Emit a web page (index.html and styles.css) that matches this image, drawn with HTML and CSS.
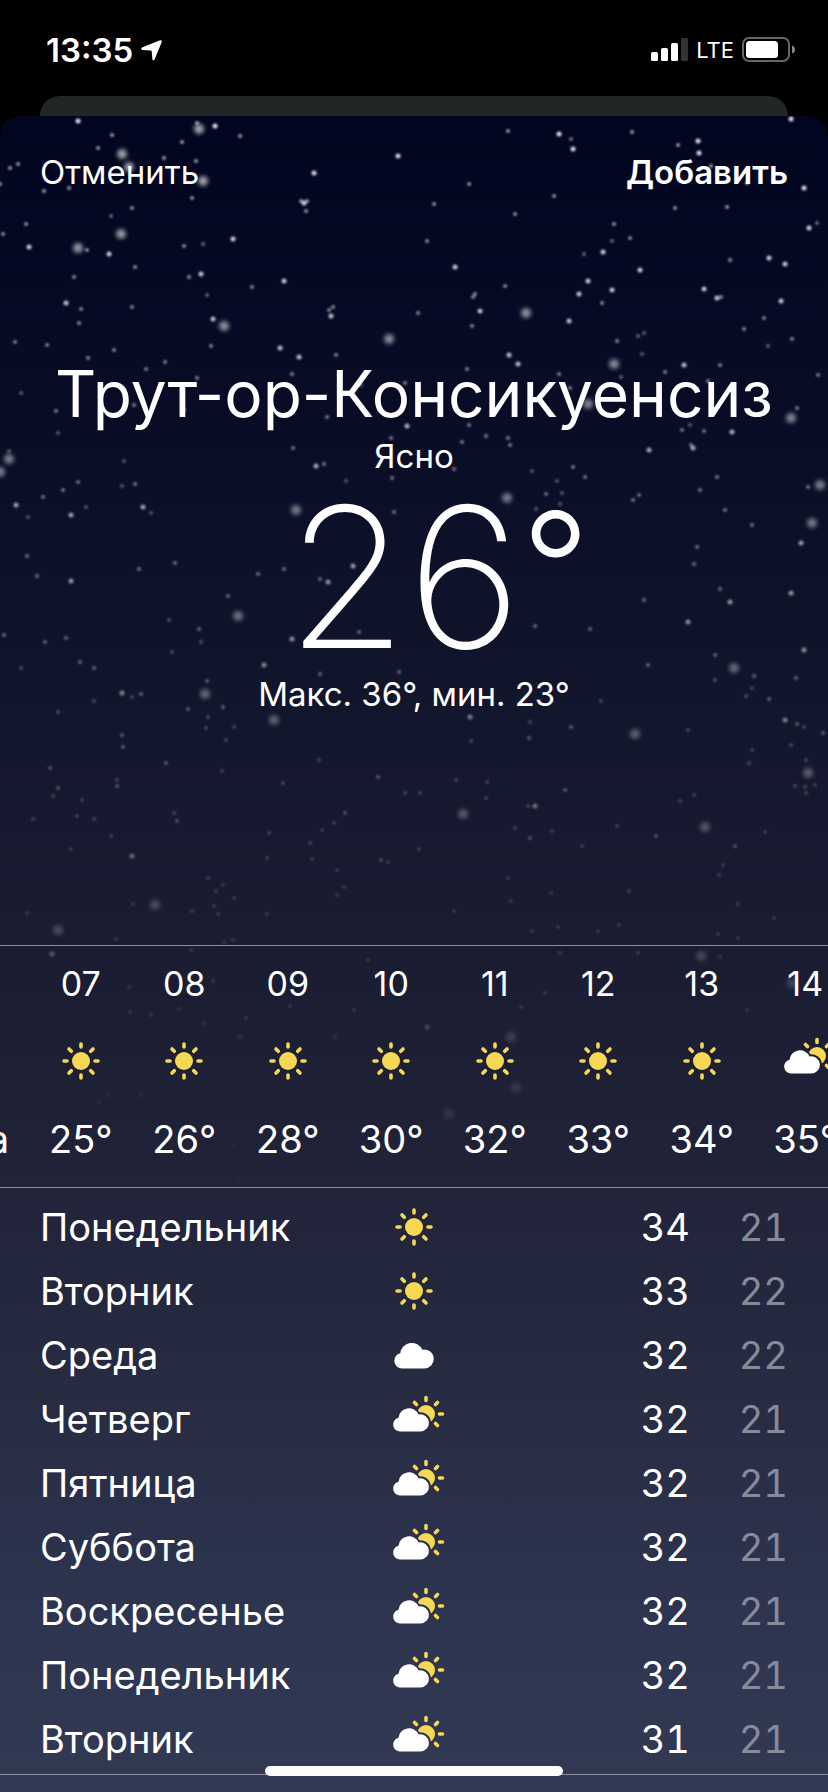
FILE: index.html
```html
<!DOCTYPE html>
<html lang="ru">
<head>
    <meta charset="UTF-8">
    <meta name="viewport" content="width=device-width, initial-scale=1">
    <title>Погода</title>
    <link rel="stylesheet" href="styles.css">
</head>
<body>

<!-- shared icons -->
<svg class="sprite" aria-hidden="true">
    <defs>
        <path id="cloud-shape" d="M7 36.5A7 7 0 0 1 5.5 22.7A10.5 10.5 0 0 1 25.5 19.5A8.6 8.6 0 1 1 27 36.5Z"/>
        <mask id="behind-cloud" maskUnits="userSpaceOnUse" x="0" y="0" width="52" height="38">
            <rect width="52" height="38" fill="#fff"/>
            <use href="#cloud-shape" fill="#000" stroke="#000" stroke-width="4"/>
        </mask>
    </defs>
    <symbol id="sun" viewBox="0 0 38 38">
        <circle cx="19" cy="19" r="9" fill="#f6d855"/>
        <path d="M19 2v3M19 33v3M2 19h3M33 19h3M7 7l2.3 2.3M28.7 28.7l2.3 2.3M7 31l2.3-2.3M28.7 9.3l2.3-2.3" stroke="#f6d855" stroke-width="3.6" stroke-linecap="round"/>
    </symbol>
    <symbol id="cloud" viewBox="0 12.5 36 24.5">
        <use href="#cloud-shape" fill="#fff"/>
    </symbol>
    <symbol id="partly" viewBox="-10 0 62 48">
        <g mask="url(#behind-cloud)">
            <circle cx="33" cy="19" r="9" fill="#f6d855"/>
            <path d="M33 2.5v3M46.5 19h3M21.5 7.5l2 2M42.5 28.5l2 2M42.5 9.5l2-2" stroke="#f6d855" stroke-width="3.6" stroke-linecap="round"/>
        </g>
        <use href="#cloud-shape" fill="#fff"/>
    </symbol>
</svg>

<div class="status">
    <div class="status-left">
        <span>13:35</span>
        <svg class="location" viewBox="0 0 21 21"><path d="M19 .3Q21.300 0 20.700 2.300L13.600 19.600Q12.400 21.300 11.400 19.400L10.700 11.200Q10.600 10.500 9.900 10.400L1.200 9.900Q-.8 9 1 7.600Z" fill="#fff"/></svg>
    </div>
    <div class="status-right">
        <svg class="signal" viewBox="0 0 37 24">
            <g fill="#fff">
                <rect x="0" y="14" width="7" height="9" rx="1.500"/>
                <rect x="10" y="10" width="7" height="13" rx="1.500"/>
                <rect x="20" y="5" width="7" height="18" rx="1.500"/>
            </g>
            <rect x="30" y="0" width="7" height="23" rx="1.500" fill="#333"/>
        </svg>
        <span class="network">LTE</span>
        <svg class="battery" viewBox="0 0 54 26">
            <rect x="1" y="1" width="46" height="23" rx="6" fill="none" stroke="#666" stroke-width="2"/>
            <rect x="4" y="4" width="32" height="17" rx="3.500" fill="#fff"/>
            <path d="M50 8.500q3 1 3 4t-3 4z" fill="#888"/>
        </svg>
    </div>
</div>

<div class="back-sheet"></div>

<main class="sheet">
    <svg class="stars" viewBox="0 116 828 1100" aria-hidden="true">
        <defs>
            <linearGradient id="fade" gradientUnits="userSpaceOnUse" x1="0" y1="116" x2="0" y2="1216">
                <stop offset="0" stop-color="#fff" stop-opacity=".85"/>
                <stop offset=".45" stop-color="#fff" stop-opacity=".52"/>
                <stop offset="1" stop-color="#fff" stop-opacity=".05"/>
            </linearGradient>
        </defs>
        <path class="star star-big" stroke="url(#fade)" d="M199 129h.1M122 154h.1M129 167h.1M203 181h.1M121 234h.1M78 248h.1M224 326h.1M389 339h.1M9 459h.1M0 472h.1M296 510h.1M526 313h.1M614 364h.1M588 404h.1M791 418h.1M820 485h.1M507 498h.1M238 616h.1M205 694h.1M274 720h.1M635 734h.1M734 668h.1M812 523h.1M808 773h.1M463 814h.1M705 827h.1M155 905h.1M58 930h.1M701 956h.1M792 983h.1M511 1037h.1M516 1088h.1M449 1114h.1"/>
        <path class="star star-bright" stroke="url(#fade)" d="M78 121h.1M215 126h.1M398 156h.1M314 173h.1M304 203h.1M559 134h.1M791 119h.1M699 153h.1M573 149h.1M698 141h.1M804 188h.1M29 247h.1M109 254h.1M201 274h.1M233 239h.1M284 281h.1M66 303h.1M213 319h.1M331 316h.1M280 348h.1M299 357h.1M407 426h.1M316 466h.1M16 505h.1M71 515h.1M143 507h.1M455 267h.1M603 252h.1M640 270h.1M588 281h.1M579 294h.1M569 321h.1M480 311h.1M509 355h.1M518 364h.1M769 258h.1M809 228h.1M704 289h.1M717 298h.1M781 301h.1M732 432h.1M693 448h.1M649 450h.1M684 365h.1M612 290h.1M785 264h.1M71 581h.1M292 639h.1M328 582h.1M264 665h.1M353 566h.1M730 602h.1M791 593h.1M688 622h.1M804 650h.1M122 693h.1M132 856h.1M535 806h.1M470 717h.1M785 720h.1M801 543h.1M52 954h.1M427 1027h.1"/>
        <path class="star" stroke="url(#fade)" d="M112 135h.1M98 148h.1M182 142h.1M240 136h.1M164 158h.1M196 161h.1M10 168h.1M18 164h.1M44 191h.1M69 188h.1M192 198h.1M132 208h.1M301 201h.1M307 201h.1M306 211h.1M0 184h.1M197 123h.1M678 145h.1M632 132h.1M508 131h.1M469 184h.1M554 196h.1M434 204h.1M515 214h.1M711 166h.1M747 183h.1M727 207h.1M675 208h.1M26 224h.1M3 234h.1M87 250h.1M135 267h.1M184 246h.1M74 277h.1M189 277h.1M252 287h.1M81 309h.1M132 307h.1M79 323h.1M333 307h.1M329 310h.1M15 342h.1M47 345h.1M88 358h.1M114 350h.1M165 362h.1M146 369h.1M211 346h.1M336 355h.1M197 378h.1M292 374h.1M56 411h.1M134 405h.1M405 383h.1M327 417h.1M391 438h.1M293 448h.1M324 464h.1M78 482h.1M63 490h.1M43 497h.1M135 484h.1M392 478h.1M394 512h.1M614 224h.1M630 238h.1M505 286h.1M475 294h.1M473 297h.1M602 303h.1M427 241h.1M418 313h.1M472 326h.1M467 369h.1M617 341h.1M665 372h.1M720 365h.1M708 381h.1M559 374h.1M570 388h.1M730 260h.1M721 297h.1M764 318h.1M744 329h.1M792 339h.1M818 375h.1M797 408h.1M704 431h.1M682 430h.1M691 445h.1M462 442h.1M469 425h.1M486 436h.1M508 438h.1M510 445h.1M454 469h.1M573 467h.1M585 477h.1M546 494h.1M639 495h.1M633 500h.1M700 490h.1M717 477h.1M725 510h.1M808 487h.1M27 556h.1M175 563h.1M139 569h.1M37 576h.1M258 574h.1M284 569h.1M320 579h.1M228 596h.1M199 629h.1M4 635h.1M45 642h.1M66 638h.1M80 662h.1M94 668h.1M359 632h.1M535 626h.1M590 629h.1M697 547h.1M694 564h.1M752 525h.1M720 589h.1M644 600h.1M320 674h.1M399 672h.1M715 655h.1M648 665h.1M796 678h.1M754 676h.1M769 699h.1M207 681h.1M141 694h.1M188 709h.1M223 707h.1M122 735h.1M123 747h.1M50 768h.1M166 763h.1M117 786h.1M58 788h.1M177 821h.1M345 813h.1M378 777h.1M530 838h.1M656 836h.1M735 846h.1M381 860h.1M565 790h.1M571 727h.1M529 738h.1M797 724h.1M823 733h.1"/>
        <path class="star star-dim" stroke="url(#fade)" d="M111 216h.1M571 139h.1M203 244h.1M207 295h.1M21 393h.1M58 433h.1M184 410h.1M361 385h.1M9 451h.1M124 461h.1M28 517h.1M86 507h.1M122 486h.1M151 513h.1M346 481h.1M612 241h.1M584 254h.1M638 336h.1M644 333h.1M642 354h.1M621 377h.1M817 223h.1M768 346h.1M690 425h.1M532 471h.1M557 481h.1M562 493h.1M560 504h.1M536 509h.1M169 620h.1M201 642h.1M172 652h.1M21 668h.1M132 697h.1M94 701h.1M58 712h.1M208 717h.1M206 728h.1M234 727h.1M226 740h.1M222 771h.1M117 780h.1M53 796h.1M82 800h.1M33 819h.1M94 819h.1M77 816h.1M174 813h.1M111 836h.1M71 849h.1M269 833h.1M334 823h.1M322 830h.1M319 760h.1M283 783h.1M715 680h.1M752 688h.1M746 696h.1M601 701h.1M804 727h.1M791 745h.1M688 730h.1M530 722h.1M471 741h.1M752 750h.1M749 763h.1M806 760h.1M795 786h.1M805 787h.1M806 793h.1M815 785h.1M456 780h.1M487 782h.1M486 798h.1M694 795h.1M680 801h.1M405 793h.1M420 793h.1M528 806h.1M515 828h.1M552 831h.1M617 826h.1M765 832h.1M582 846h.1M419 849h.1M388 862h.1M312 859h.1M337 870h.1M267 858h.1M310 843h.1M344 887h.1M337 895h.1M216 891h.1M208 878h.1M223 885h.1M234 898h.1M214 906h.1M218 914h.1M267 914h.1M133 904h.1M192 911h.1M27 913h.1M508 878h.1M511 901h.1M454 911h.1M551 893h.1M629 891h.1M719 875h.1M723 865h.1M774 918h.1M738 904h.1M718 934h.1M738 938h.1M619 925h.1M558 927h.1M532 931h.1M598 931h.1M224 942h.1M233 940h.1M116 939h.1M191 950h.1M368 960h.1M129 987h.1M213 981h.1M130 1012h.1M151 1015h.1M179 1009h.1M246 1018h.1M204 1023h.1M290 1006h.1M354 1010h.1M240 1037h.1M335 1037h.1M99 1102h.1M108 1095h.1M141 1095h.1M233 1145h.1M239 1179h.1M521 1007h.1M545 993h.1M560 953h.1M638 953h.1M720 957h.1M747 1010h.1"/>
    </svg>

    <header class="toolbar">
        <button type="button">Отменить</button>
        <button type="button" class="add">Добавить</button>
    </header>

    <section class="now">
        <h1>Трут-ор-Консикуенсиз</h1>
        <p>Ясно</p>
        <div class="temp">26<span class="degree">°</span></div>
        <p>Макс. 36°, мин. 23°</p>
    </section>

    <section class="hours">
        <div class="hour edge"><b>а</b></div>
        <div class="hour"><span>07</span><svg class="sun"><use href="#sun"/></svg><b>25°</b></div>
        <div class="hour"><span>08</span><svg class="sun"><use href="#sun"/></svg><b>26°</b></div>
        <div class="hour"><span>09</span><svg class="sun"><use href="#sun"/></svg><b>28°</b></div>
        <div class="hour"><span>10</span><svg class="sun"><use href="#sun"/></svg><b>30°</b></div>
        <div class="hour"><span>11</span><svg class="sun"><use href="#sun"/></svg><b>32°</b></div>
        <div class="hour"><span>12</span><svg class="sun"><use href="#sun"/></svg><b>33°</b></div>
        <div class="hour"><span>13</span><svg class="sun"><use href="#sun"/></svg><b>34°</b></div>
        <div class="hour"><span>14</span><svg class="partly"><use href="#partly"/></svg><b>35°</b></div>
    </section>

    <table class="days">
        <tr><th scope="row">Понедельник</th><td class="icon"><svg class="sun"><use href="#sun"/></svg></td><td class="high">34</td><td class="low">21</td></tr>
        <tr><th scope="row">Вторник</th><td class="icon"><svg class="sun"><use href="#sun"/></svg></td><td class="high">33</td><td class="low">22</td></tr>
        <tr><th scope="row">Среда</th><td class="icon"><svg class="cloud"><use href="#cloud"/></svg></td><td class="high">32</td><td class="low">22</td></tr>
        <tr><th scope="row">Четверг</th><td class="icon"><svg class="partly"><use href="#partly"/></svg></td><td class="high">32</td><td class="low">21</td></tr>
        <tr><th scope="row">Пятница</th><td class="icon"><svg class="partly"><use href="#partly"/></svg></td><td class="high">32</td><td class="low">21</td></tr>
        <tr><th scope="row">Суббота</th><td class="icon"><svg class="partly"><use href="#partly"/></svg></td><td class="high">32</td><td class="low">21</td></tr>
        <tr><th scope="row">Воскресенье</th><td class="icon"><svg class="partly"><use href="#partly"/></svg></td><td class="high">32</td><td class="low">21</td></tr>
        <tr><th scope="row">Понедельник</th><td class="icon"><svg class="partly"><use href="#partly"/></svg></td><td class="high">32</td><td class="low">21</td></tr>
        <tr><th scope="row">Вторник</th><td class="icon"><svg class="partly"><use href="#partly"/></svg></td><td class="high">31</td><td class="low">21</td></tr>
    </table>
</main>

<div class="home-indicator"></div>

</body>
</html>
```

FILE: styles.css
```css
* {
    box-sizing: border-box;
}

body {
    margin: 0;
    min-height: 100vh;
    display: flex;
    flex-direction: column;

    font-family: Inter, "Liberation Sans", sans-serif;
    background-color: #000;
    color: #fff;
}

svg {
    display: block;
}

.sprite {
    position: absolute;
    width: 0;
    height: 0;
}

/* status bar */

.status {
    height: 96px;
    padding: 4px 32px 0 46px;
    display: flex;
    justify-content: space-between;
    align-items: center;

    font-size: 33px;
    font-weight: 600;
}

.status-left,
.status-right {
    display: flex;
    align-items: center;
    gap: 8px;
}

.location {
    width: 21px;
    height: 21px;
}

.signal {
    width: 37px;
    height: 24px;
}

.network {
    font-size: 22px;
    font-weight: 400;
}

.battery {
    width: 54px;
    height: 26px;
}

/* sheets */

.back-sheet {
    height: 20px;
    margin: 0 40px;
    border-radius: 20px 20px 0 0;
    background-color: #232627;
}

.sheet {
    flex: 1;
    position: relative;
    overflow: hidden;
    border-radius: 20px 20px 0 0;
    background: linear-gradient(#01051f, #090d26 20%, #12162c 35%, #1a1c32 50%, #202238 62%, #262b41 75%, #2e3550 90%, #323953);
}

.stars {
    position: absolute;
    top: 0;
    left: 0;
    width: 100%;
}

.star {
    fill: none;
    stroke-width: 4;
    stroke-linecap: round;
    opacity: 0.7;
    filter: blur(1px);
}

.star-bright {
    stroke-width: 5;
    opacity: 1;
}

.star-dim {
    opacity: 0.5;
}

.star-big {
    stroke-width: 10;
    opacity: 0.75;
    filter: blur(2px);
}

.toolbar,
.now,
.hours,
.days {
    position: relative;
}

.toolbar {
    display: flex;
    justify-content: space-between;
    padding: 36px 40px 0;
}

button {
    padding: 0;
    border: 0;
    background: none;
    color: inherit;
    font: inherit;
    font-size: 33px;
    line-height: 40px;
    cursor: pointer;
}

button.add {
    font-weight: 600;
}

/* current weather */

.now {
    height: 753px;
    padding-top: 160px;
    text-align: center;
}

h1 {
    margin: 0;
    font-size: 64px;
    font-weight: 400;
    line-height: 84px;
    white-space: nowrap;
}

p {
    margin: 0;
    font-size: 33px;
    line-height: 40px;
}

.temp {
    padding: 4px 0 0 48px;
    font-size: 196px;
    font-weight: 200;
    line-height: 194px;
}

.degree {
    font-size: 150px;
    font-weight: 300;
    line-height: 100px;
    vertical-align: 28px;
}

/* hourly forecast */

.hours {
    display: grid;
    grid-template-columns: 29px repeat(8, 12.5%);
    height: 243px;
    overflow: hidden;
    border-top: 1px solid #8d8f9e;
    border-bottom: 1px solid #8d8f9e;
}

.hour {
    display: flex;
    flex-direction: column;
    align-items: center;
    justify-content: space-between;
    padding: 16px 0 24px;

    font-size: 34px;
    line-height: 44px;
}

.hour b {
    font-size: 38px;
    font-weight: 400;
    line-height: 48px;
}

.edge {
    align-items: flex-end;
    justify-content: flex-end;
    padding-right: 20px;
}

.sun {
    width: 38px;
    height: 38px;
}

.cloud {
    width: 40px;
    height: 27px;
}

.partly {
    width: 62px;
    height: 48px;
}

/* daily forecast */

.days {
    width: 100%;
    padding: 7px 40px 3px;
    table-layout: fixed;
    border-collapse: separate;
    border-spacing: 0;
    border-bottom: 1px solid #8d8f9e;

    font-size: 38px;
    line-height: 48px;
    font-variant-numeric: tabular-nums;
}

.days th,
.days td {
    height: 64px;
    padding: 0;
    font-weight: 400;
    text-align: right;
}

.days th {
    width: 44%;
    text-align: left;
}

.days .icon {
    width: 12%;
}

.icon svg {
    margin: 0 auto;
}

.days .low {
    width: 98px;
    color: #868a9a;
}

.home-indicator {
    position: fixed;
    bottom: 16px;
    left: 32%;
    right: 32%;
    height: 10px;
    border-radius: 5px;
    background-color: #fafbfb;
}
```
